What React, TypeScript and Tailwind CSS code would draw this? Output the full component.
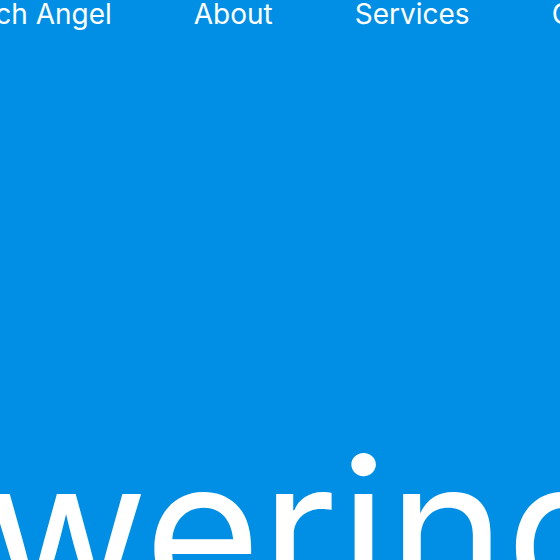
export default function App() {
  const links = ['Tech Angel', 'About', 'Services', 'Contact'];

  return (
    <div
      className="h-[560px] w-[560px] overflow-hidden bg-[#018fe5] text-white"
      style={{ fontFamily: 'Inter, "Open Sans", sans-serif' }}
    >
      {/* top nav, scrolled partly out of view */}
      <nav className="flex gap-[82px] whitespace-nowrap -ml-[37px] text-[28px] leading-none">
        {links.map((l) => (
          <a key={l} className="shrink-0">
            {l}
          </a>
        ))}
      </nav>

      {/* big hero word */}
      <div className="mt-[402px] whitespace-nowrap -ml-[550px] text-[200px] leading-none font-normal">
        Empowering
      </div>
    </div>
  );
}
